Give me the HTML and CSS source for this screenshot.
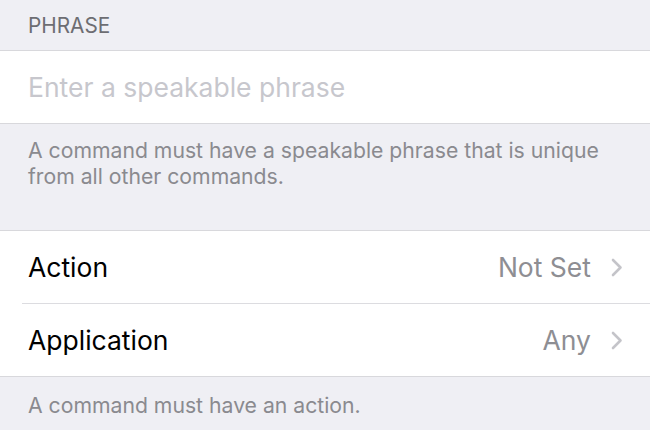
FILE: index.html
```html
<!DOCTYPE html>
<html>
<head>
<meta charset="utf-8">
<link rel="stylesheet" href="styles.css">
</head>
<body>
<div class="screen">
  <div class="section-header">PHRASE</div>
  <div class="group">
    <div class="input-row"><span class="placeholder">Enter a speakable phrase</span></div>
  </div>
  <div class="section-footer tall">A command must have a speakable phrase that is unique from all other commands.</div>
  <div class="group">
    <div class="row">
      <span class="label">Action</span>
      <span class="value">Not Set</span>
      <svg class="chev" width="12" height="19" viewBox="0 0 12 19"><path d="M2 2 L9.5 9.5 L2 17" fill="none" stroke="#c4c4c9" stroke-width="2.6" stroke-linecap="round" stroke-linejoin="round"/></svg>
    </div>
    <div class="row">
      <span class="label">Application</span>
      <span class="value">Any</span>
      <svg class="chev" width="12" height="19" viewBox="0 0 12 19"><path d="M2 2 L9.5 9.5 L2 17" fill="none" stroke="#c4c4c9" stroke-width="2.6" stroke-linecap="round" stroke-linejoin="round"/></svg>
    </div>
  </div>
  <div class="section-footer bottom">A command must have an action.</div>
</div>
</body>
</html>
```
FILE: styles.css
```css
html, body {
  margin: 0;
  padding: 0;
  background: #efeff4;
}
.screen {
  width: 650px;
  height: 430px;
  overflow: hidden;
  background: #efeff4;
  font-family: Inter, "Liberation Sans", sans-serif;
}
.section-header {
  height: 50px;
  box-sizing: border-box;
  padding: 14px 0 0 28px;
  font-size: 20.8px;
  color: #6d6d72;
  line-height: 24px;
}
.group {
  background: #fff;
  border-top: 1px solid #d8d8dc;
  border-bottom: 1px solid #d8d8dc;
}
.input-row {
  height: 72px;
  display: flex;
  align-items: center;
  padding-left: 28px;
}
.placeholder {
  font-size: 26.5px;
  color: #c7c7cd;
}
.section-footer {
  padding: 13px 28px 0 28px;
  font-size: 21.2px;
  line-height: 26px;
  color: #8a8a8f;
}
.section-footer.tall {
  height: 106px;
  box-sizing: border-box;
  padding-right: 40px;
}
.section-footer.bottom {
  padding-top: 15px;
}
.row {
  height: 72px;
  display: flex;
  align-items: center;
  padding: 0 27px 0 28px;
}
.row + .row {
  border-top: 1px solid #dcdce0;
  margin-left: 22px;
  padding-left: 6px;
}
.label {
  flex: 1;
  font-size: 26.5px;
  color: #000;
}
.value {
  font-size: 26.5px;
  color: #8e8e93;
  margin-right: 20px;
}
.chev {
  display: block;
}
```
